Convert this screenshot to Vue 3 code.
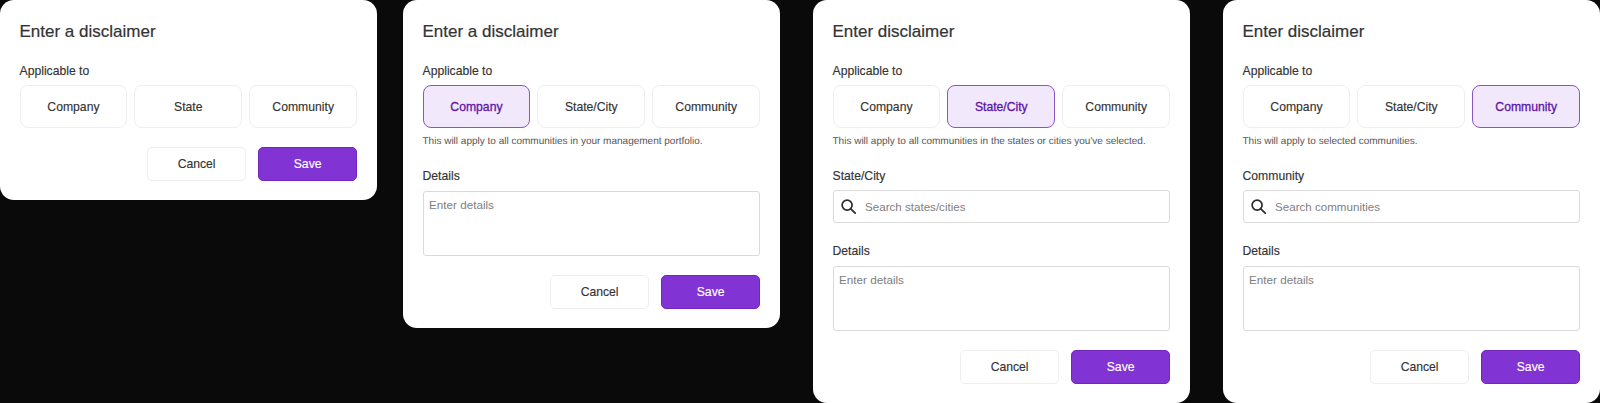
<script setup>
const cards = [
  {
    title: "Enter a disclaimer",
    options: ["Company", "State", "Community"],
    active: -1,
  },
  {
    title: "Enter a disclaimer",
    options: ["Company", "State/City", "Community"],
    active: 0,
    hint: "This will apply to all communities in your management portfolio.",
    details: true,
  },
  {
    title: "Enter disclaimer",
    options: ["Company", "State/City", "Community"],
    active: 1,
    hint: "This will apply to all communities in the states or cities you've selected.",
    searchLabel: "State/City",
    searchText: "Search states/cities",
    details: true,
  },
  {
    title: "Enter disclaimer",
    options: ["Company", "State/City", "Community"],
    active: 2,
    hint: "This will apply to selected communities.",
    searchLabel: "Community",
    searchText: "Search communities",
    details: true,
  },
];
</script>

<template>
  <div class="page">
    <div class="card" v-for="(card, i) in cards" :key="i">
      <h2 class="title">{{ card.title }}</h2>
      <div class="label">Applicable to</div>
      <div class="options">
        <div
          class="option"
          :class="{ active: card.active === n }"
          v-for="(opt, n) in card.options"
          :key="opt"
        >
          {{ opt }}
        </div>
      </div>
      <p class="hint" v-if="card.hint">{{ card.hint }}</p>

      <template v-if="card.searchLabel">
        <div class="label field-label">{{ card.searchLabel }}</div>
        <div class="search">
          <svg width="15" height="15" viewBox="0 0 15 15" fill="none" stroke="#2b2b2b" stroke-width="1.7">
            <circle cx="6.1" cy="6.1" r="5" />
            <path d="M9.8 9.8 14.2 14.2" stroke-linecap="round" />
          </svg>
          <span>{{ card.searchText }}</span>
        </div>
      </template>

      <template v-if="card.details">
        <div class="label field-label">Details</div>
        <div class="textarea">Enter details</div>
      </template>

      <div class="actions">
        <div class="btn">Cancel</div>
        <div class="btn primary">Save</div>
      </div>
    </div>
  </div>
</template>

<style>
html,
body {
  margin: 0;
  background: #0a0a0a;
}
</style>

<style scoped>
.page {
  display: flex;
  align-items: flex-start;
  gap: 33.5px;
  height: 403px;
  overflow: hidden;
  background: #0a0a0a;
  font-family: "Liberation Sans", Arial, sans-serif;
  color: #333;
}

.card {
  box-sizing: border-box;
  flex: none;
  width: 376.5px;
  padding: 22px 19.4px 19px 19.5px;
  background: #fff;
  border-radius: 14px;
}

.card:nth-child(2) {
  margin-left: -7px;
}

.title {
  margin: 0 0 21.5px;
  font-size: 17px;
  line-height: 20px;
  font-weight: 400;
  -webkit-text-stroke: 0.2px;
}

.label {
  font-size: 12.2px;
  line-height: 14px;
  -webkit-text-stroke: 0.15px;
}

.options {
  display: grid;
  grid-template-columns: repeat(3, 1fr);
  gap: 7px;
  margin-top: 7.5px;
}

.option {
  display: flex;
  align-items: center;
  justify-content: center;
  height: 43px;
  box-sizing: border-box;
  border: 1px solid #eeeeee;
  border-radius: 8px;
  font-size: 12.2px;
  -webkit-text-stroke: 0.15px;
}

.option.active {
  background: #f1e9fb;
  border: 1.6px solid #8a55c4;
  color: #5f14a8;
  -webkit-text-stroke: 0.3px;
}

.hint {
  margin: 7.5px 0 0;
  font-size: 10px;
  line-height: 12px;
  color: #555;
  text-rendering: geometricPrecision;
}

.field-label {
  margin-top: 21.5px;
}

.search {
  display: flex;
  align-items: center;
  gap: 9px;
  box-sizing: border-box;
  height: 33px;
  margin-top: 7px;
  padding: 0 10px 0 7.5px;
  border: 1.5px solid #dadada;
  border-radius: 3px;
  font-size: 11.6px;
  color: #808080;
}

.search + .field-label {
  margin-top: 21px;
}

.textarea {
  box-sizing: border-box;
  height: 65.5px;
  margin-top: 7.5px;
  padding: 6.5px 5.5px;
  border: 1.5px solid #dadada;
  border-radius: 3px;
  font-size: 11.7px;
  line-height: 14px;
  color: #808080;
}

.actions {
  display: flex;
  justify-content: flex-end;
  gap: 12px;
  margin-top: 19px;
}

.btn {
  display: flex;
  align-items: center;
  justify-content: center;
  box-sizing: border-box;
  width: 99px;
  height: 33.5px;
  border: 1px solid #eeeeee;
  border-radius: 5px;
  font-size: 12.2px;
  -webkit-text-stroke: 0.15px;
}

.btn.primary {
  background: #8233d4;
  border-color: #7028bb;
  color: #fff;
}
</style>
